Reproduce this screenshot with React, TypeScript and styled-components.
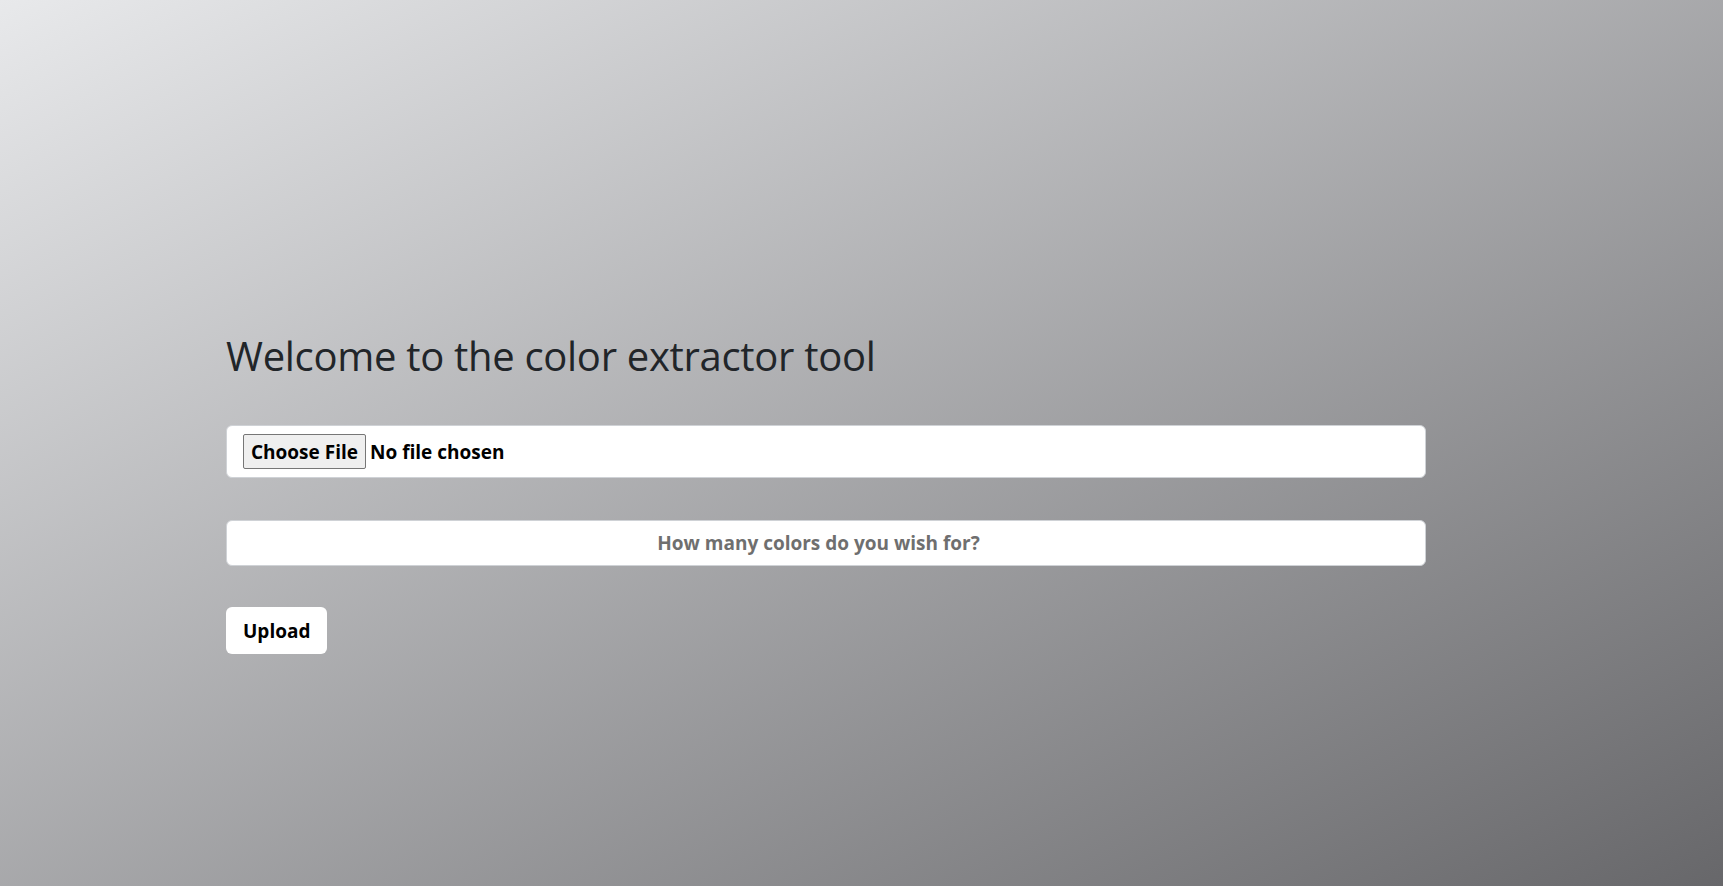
import React from "react";
import styled, { createGlobalStyle } from "styled-components";

const Global = createGlobalStyle`
  html, body { margin: 0; padding: 0; height: 100%; }
  body {
    font-family: "Open Sans", "Noto Sans", sans-serif;
    background: linear-gradient(to bottom right, #e8e9eb, #67676a);
    min-height: 100vh;
  }
  #root { min-height: 100vh; }
`;

const Page = styled.main`
  min-height: 100vh;
  box-sizing: border-box;
  padding: 332px 0 0 226px;
`;

const Form = styled.form`
  width: 1200px;
  display: flex;
  flex-direction: column;
  align-items: flex-start;
`;

const Title = styled.h1`
  margin: 0 0 45px;
  font-family: "Open Sans", sans-serif;
  font-weight: 500;
  font-size: 40px;
  line-height: 1.2;
  color: #212529;
  letter-spacing: -0.3px;
`;

const FileField = styled.input`
  box-sizing: border-box;
  width: 100%;
  height: 53px;
  padding: 8px 16px;
  background: #fff;
  border: 1px solid #cfd2d6;
  border-radius: 6px;
  font-family: "Open Sans", sans-serif;
  font-weight: 700;
  font-size: 19px;
  color: #000;
  margin: 0 0 42px;

  &::file-selector-button {
    height: 35px;
    margin-right: 4px;
    padding: 0 7px;
    font-family: "Open Sans", sans-serif;
    font-weight: 700;
    font-size: 19px;
    color: #000;
    background: #efefef;
    border: 1px solid #767676;
    border-radius: 2px;
  }
`;

const CountField = styled.input`
  box-sizing: border-box;
  width: 100%;
  height: 46px;
  background: #fff;
  border: 1px solid #cfd2d6;
  border-radius: 6px;
  text-align: center;
  font-family: "Open Sans", sans-serif;
  font-weight: 700;
  font-size: 19px;
  margin: 0 0 41px;
  outline: none;

  &::placeholder {
    color: #6f6f6f;
  }
`;

const UploadButton = styled.button`
  box-sizing: border-box;
  height: 47px;
  padding: 0 17px;
  background: #fff;
  border: none;
  border-radius: 6px;
  font-family: "Open Sans", sans-serif;
  font-weight: 700;
  font-size: 19px;
  color: #000;
  cursor: pointer;
`;

export default function App() {
  return (
    <>
      <Global />
      <Page>
        <Form onSubmit={(e) => e.preventDefault()}>
          <Title>Welcome to the color extractor tool</Title>
          <FileField type="file" />
          <CountField type="number" placeholder="How many colors do you wish for?" />
          <UploadButton type="submit">Upload</UploadButton>
        </Form>
      </Page>
    </>
  );
}
